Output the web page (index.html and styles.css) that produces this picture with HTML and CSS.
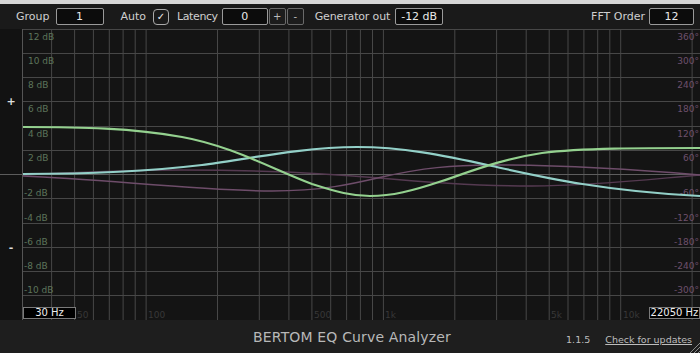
FILE: index.html
```html
<!DOCTYPE html>
<html>
<head>
<meta charset="utf-8">
<link rel="stylesheet" href="styles.css">
</head>
<body>
<div class="app">
  <div class="topstrip"></div>
  <header class="toolbar">
    <span class="lbl lbl-group">Group</span>
    <span class="field f-group">1</span>
    <span class="lbl lbl-auto">Auto</span>
    <span class="check">&#10003;</span>
    <span class="lbl lbl-lat">Latency</span>
    <span class="field f-lat">0</span>
    <span class="btn b-plus">+</span>
    <span class="btn b-minus">-</span>
    <span class="lbl lbl-gen">Generator out</span>
    <span class="field f-gen">-12 dB</span>
    <span class="spacer"></span>
    <span class="lbl lbl-fft">FFT Order</span>
    <span class="field f-fft">12</span>
  </header>
  <main class="graph-row">
    <div class="side">
      <div class="side-half">+</div>
      <div class="side-zero"></div>
      <div class="side-half minus">-</div>
    </div>
    <div class="graph">
      <svg class="plot" width="677" height="291" viewBox="0 0 677 291">
        <g class="vgrid">
          <line x1="28.6" y1="0" x2="28.6" y2="291"/>
          <line x1="51.6" y1="0" x2="51.6" y2="291"/>
          <line x1="70.4" y1="0" x2="70.4" y2="291"/>
          <line x1="86.3" y1="0" x2="86.3" y2="291"/>
          <line x1="100.1" y1="0" x2="100.1" y2="291"/>
          <line x1="112.2" y1="0" x2="112.2" y2="291"/>
          <line x1="123.1" y1="0" x2="123.1" y2="291"/>
          <line x1="194.5" y1="0" x2="194.5" y2="291"/>
          <line x1="236.3" y1="0" x2="236.3" y2="291"/>
          <line x1="265.9" y1="0" x2="265.9" y2="291"/>
          <line x1="288.9" y1="0" x2="288.9" y2="291"/>
          <line x1="307.7" y1="0" x2="307.7" y2="291"/>
          <line x1="323.6" y1="0" x2="323.6" y2="291"/>
          <line x1="337.4" y1="0" x2="337.4" y2="291"/>
          <line x1="349.5" y1="0" x2="349.5" y2="291"/>
          <line x1="360.4" y1="0" x2="360.4" y2="291"/>
          <line x1="431.8" y1="0" x2="431.8" y2="291"/>
          <line x1="473.6" y1="0" x2="473.6" y2="291"/>
          <line x1="503.2" y1="0" x2="503.2" y2="291"/>
          <line x1="526.2" y1="0" x2="526.2" y2="291"/>
          <line x1="545.0" y1="0" x2="545.0" y2="291"/>
          <line x1="560.9" y1="0" x2="560.9" y2="291"/>
          <line x1="574.7" y1="0" x2="574.7" y2="291"/>
          <line x1="586.8" y1="0" x2="586.8" y2="291"/>
          <line x1="597.7" y1="0" x2="597.7" y2="291"/>
          <line x1="669.1" y1="0" x2="669.1" y2="291"/>
        </g>
        <g class="hgrid">
          <line x1="0" y1="0.5" x2="677" y2="0.5"/>
          <line x1="0" y1="24.5" x2="677" y2="24.5"/>
          <line x1="0" y1="48.5" x2="677" y2="48.5"/>
          <line x1="0" y1="72.5" x2="677" y2="72.5"/>
          <line x1="0" y1="97.5" x2="677" y2="97.5"/>
          <line x1="0" y1="121.5" x2="677" y2="121.5"/>
          <line x1="0" y1="169.5" x2="677" y2="169.5"/>
          <line x1="0" y1="194.5" x2="677" y2="194.5"/>
          <line x1="0" y1="218.5" x2="677" y2="218.5"/>
          <line x1="0" y1="242.5" x2="677" y2="242.5"/>
          <line x1="0" y1="266.5" x2="677" y2="266.5"/>
        </g>
        <line class="zero" x1="0" y1="145.5" x2="677" y2="145.5"/>
        <g class="dbl">
          <text x="5" y="7.5">12 dB</text>
          <text x="5" y="31.75">10 dB</text>
          <text x="5" y="56">8 dB</text>
          <text x="5" y="80.25">6 dB</text>
          <text x="5" y="104.5">4 dB</text>
          <text x="5" y="128.75">2 dB</text>
          <text x="1" y="164.25">-2 dB</text>
          <text x="1" y="188.5">-4 dB</text>
          <text x="1" y="212.75">-6 dB</text>
          <text x="1" y="237">-8 dB</text>
          <text x="1" y="261.25">-10 dB</text>
        </g>
        <g class="phl">
          <text x="676" y="7.5">360°</text>
          <text x="676" y="31.75">300°</text>
          <text x="676" y="56">240°</text>
          <text x="676" y="80.25">180°</text>
          <text x="676" y="104.5">120°</text>
          <text x="676" y="128.75">60°</text>
          <text x="676" y="164.25">-60°</text>
          <text x="676" y="188.5">-120°</text>
          <text x="676" y="212.75">-180°</text>
          <text x="676" y="237">-240°</text>
          <text x="676" y="261.25">-300°</text>
        </g>
        <g class="fl">
          <text x="54" y="286">50</text>
          <text x="125" y="286">100</text>
          <text x="291" y="286">500</text>
          <text x="362" y="286">1k</text>
          <text x="528" y="286">5k</text>
          <text x="600" y="286">10k</text>
        </g>
        <g transform="translate(-1,0)">
          <path class="ph-b" d="M0,146 C60,143 100,141 160,141 C230,141 290,143 357,149 C400,153 450,157 510,157 C570,157 630,150 678,146"/>
          <path class="ph-a" d="M0,147 C80,150 180,162 250,162 C300,162 330,155 360,148 C400,139 430,136 470,136 C540,136 620,141 678,146"/>
          <path class="cyan" d="M0,145 C60,145 120,143 180,136 C220,131 280,118 335,118 C380,118 420,126 470,137 C520,148 580,162 678,167"/>
          <path class="green" d="M0,98 C60,98 110,99 160,108 C210,117 250,140 290,155 C315,163 330,167 348,167 C370,167 390,162 420,152 C450,142 480,130 520,124 C560,119 620,119 678,119"/>
        </g>
      </svg>
      <div class="fbox fbox-min">30 Hz</div>
      <div class="fbox fbox-max">22050 Hz</div>
    </div>
  </main>
  <footer class="footer">
    <span class="fill"></span>
    <span class="title">BERTOM EQ Curve Analyzer</span>
    <span class="meta">
      <span class="ver">1.1.5</span>
      <span class="upd">Check for updates</span>
    </span>
    <svg class="grip" width="12" height="12" viewBox="0 0 12 12">
      <line x1="12" y1="2" x2="2" y2="12"/>
      <line x1="12" y1="6" x2="6" y2="12"/>
      <line x1="12" y1="10" x2="10" y2="12"/>
    </svg>
  </footer>
</div>
</body>
</html>
```
FILE: styles.css
```css
* { box-sizing: border-box; }
html, body { margin: 0; padding: 0; background: #1c1c1c; }
body { width: 700px; height: 353px; overflow: hidden; font-family: "DejaVu Sans", sans-serif; }
.app { width: 700px; height: 353px; display: flex; flex-direction: column; }
.topstrip { height: 4px; background: #d6d6d6; flex: none; }
.toolbar {
  height: 25px; flex: none; background: #1a1a1a;
  display: flex; align-items: center; padding: 0 6px 0 16px;
  font-size: 11px; color: #cfcfcf;
}
.lbl { white-space: nowrap; }
.field {
  height: 17px; border: 1px solid #9a9a9a; border-radius: 2px; background: #0c0c0c;
  color: #e8e8e8; display: flex; align-items: center; justify-content: center; font-size: 11px;
}
.f-group { width: 48px; margin-left: 6px; }
.lbl-auto { margin-left: 17px; }
.check {
  width: 16px; height: 16px; margin-left: 7px; border: 1px solid #aaa; border-radius: 4px;
  display: flex; align-items: center; justify-content: center; font-size: 10px; font-weight: bold; color: #eee;
}
.lbl-lat { margin-left: 8px; letter-spacing: -0.4px; }
.f-lat { width: 46px; margin-left: 4px; }
.btn {
  width: 17px; height: 17px; border: 1px solid #6a6a6a; border-radius: 2px; background: #1c1c1c;
  display: flex; align-items: center; justify-content: center; font-size: 10px; color: #bbb;
  margin-left: 1px;
}
.lbl-gen { margin-left: 11px; letter-spacing: -0.15px; }
.f-gen { width: 48px; margin-left: 5px; }
.spacer { flex: 1; }
.f-fft { width: 45px; margin-left: 4px; }

.graph-row { height: 291px; flex: none; display: flex; background: #141414; }
.side { width: 23px; flex: none; border-right: 1px solid #555; background: #121212; display: flex; flex-direction: column; }
.side-half { flex: 1; display: flex; align-items: center; justify-content: center; color: #ddd; font-size: 11px; font-weight: bold; }
.side-zero { height: 1px; background: #5c5c5c; flex: none; }
.graph { position: relative; width: 677px; height: 291px; }
.plot { display: block; }
.vgrid line, .hgrid line { stroke: #474747; stroke-width: 1; }
.zero { stroke: #5e5e5e; stroke-width: 1; }
.dbl text { font: 9px "DejaVu Sans", sans-serif; fill: #5d755b; dominant-baseline: central; }
.phl text { font: 9px "DejaVu Sans", sans-serif; fill: #6e506c; dominant-baseline: central; text-anchor: end; }
.fl text { font: 9px "DejaVu Sans", sans-serif; fill: #383838; dominant-baseline: central; }
.green { fill: none; stroke: #94d18f; stroke-width: 2.2; }
.cyan { fill: none; stroke: #93d0c8; stroke-width: 2.2; }
.ph-a { fill: none; stroke: #6e4d6a; stroke-width: 1.5; }
.ph-b { fill: none; stroke: #553a51; stroke-width: 1.5; }
.fbox {
  position: absolute; top: 278px; height: 12px; background: #000; border: 1px solid #7a7a7a;
  color: #eee; font-size: 10px; line-height: 10px; display: flex; align-items: center; justify-content: center;
}
.fbox-min { left: 0; width: 53px; }
.fbox-max { left: 626px; width: 51px; }

.footer {
  position: relative; flex: 1; background: #1e1e1e;
  display: grid; grid-template-columns: 1fr auto 1fr; align-items: center;
}
.title { font-size: 14px; color: #b8b8b8; padding-left: 4px; letter-spacing: 0.15px; }
.meta { justify-self: end; padding: 5px 8px 0 0; display: flex; gap: 15px; font-size: 9.5px; color: #bdbdbd; }
.upd { text-decoration: underline; }
.grip { position: absolute; right: 0; bottom: 0; }
.grip line { stroke: #8a8a8a; stroke-width: 1; }
```
